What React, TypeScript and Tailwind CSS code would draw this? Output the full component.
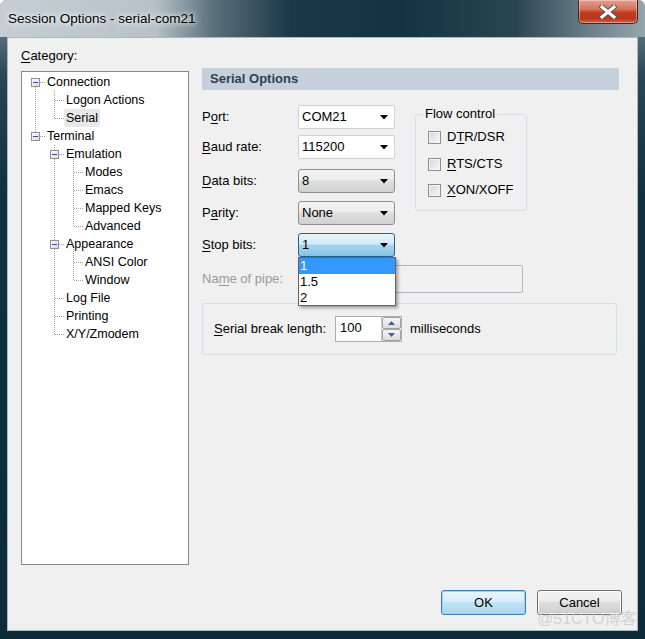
import type { ReactNode } from 'react';

type Row = { t: string; l: number; sel?: boolean };

const rows: Row[] = [
  { t: 'Connection', l: 0 },
  { t: 'Logon Actions', l: 1 },
  { t: 'Serial', l: 1, sel: true },
  { t: 'Terminal', l: 0 },
  { t: 'Emulation', l: 1 },
  { t: 'Modes', l: 2 },
  { t: 'Emacs', l: 2 },
  { t: 'Mapped Keys', l: 2 },
  { t: 'Advanced', l: 2 },
  { t: 'Appearance', l: 1 },
  { t: 'ANSI Color', l: 2 },
  { t: 'Window', l: 2 },
  { t: 'Log File', l: 1 },
  { t: 'Printing', l: 1 },
  { t: 'X/Y/Zmodem', l: 1 },
];

const indent = ['pl-[25px]', 'pl-[44px]', 'pl-[63px]'];

function Arrow() {
  return (
    <svg width="8" height="5" viewBox="0 0 8 5">
      <path d="M0 0h8L4 4.5z" fill="#000" />
    </svg>
  );
}

function Combo({ value, kind }: { value: string; kind: 'edit' | 'btn' | 'focus' }) {
  const look =
    kind === 'edit'
      ? 'border-[#cfd1d5] rounded-[2px] bg-white'
      : kind === 'btn'
        ? 'border-[#8e8f8f] rounded-[3px] bg-[linear-gradient(#f4f4f4_0%,#ececec_45%,#dedede_50%,#d0d0d0_100%)]'
        : 'border-[#2c628b] rounded-[3px] bg-[linear-gradient(#e6f4fc_0%,#d4ecfa_45%,#a9d6f0_50%,#86c2e4_100%)]';
  return (
    <div className={`w-[97px] h-[24px] border flex items-center justify-between pl-[3px] pr-[6px] ${look}`}>
      <span>{value}</span>
      <Arrow />
    </div>
  );
}

function U({ children }: { children: ReactNode }) {
  return <span className="underline underline-offset-2">{children}</span>;
}

function Check({ children }: { children: ReactNode }) {
  return (
    <div className="flex items-center h-[16px]">
      <div className="w-[13px] h-[13px] border border-[#8f8f8f] bg-[linear-gradient(135deg,#d8d8d8,#f7f7f7)] shadow-[inset_0_0_0_1px_#f4f4f4]" />
      <span className="ml-[6px]">{children}</span>
    </div>
  );
}

function TreeLines() {
  const d = { stroke: '#a0a0a0', strokeDasharray: '1 1', shapeRendering: 'crispEdges' as const };
  const box = (x: number, i: number) => {
    const y = 6 + 18 * i;
    return (
      <g key={`b${x}${i}`} shapeRendering="crispEdges">
        <rect x={x + 0.5} y={y + 0.5} width="8" height="8" fill="url(#bx)" stroke="#919191" />
        <line x1={x + 2} x2={x + 7} y1={y + 4.5} y2={y + 4.5} stroke="#2a4fa3" />
      </g>
    );
  };
  const h = (i: number, x1: number, x2: number) => (
    <line key={`h${i}${x1}`} x1={x1} x2={x2} y1={10.5 + 18 * i} y2={10.5 + 18 * i} {...d} />
  );
  return (
    <svg className="absolute inset-0" width="166" height="492">
      <defs>
        <linearGradient id="bx" x1="0" y1="0" x2="1" y2="1">
          <stop offset="0" stopColor="#ffffff" />
          <stop offset="1" stopColor="#d6d6d6" />
        </linearGradient>
      </defs>
      <line x1="13.5" x2="13.5" y1="15" y2="60" {...d} />
      {h(0, 18, 23)}
      {h(3, 18, 23)}
      <line x1="32.5" x2="32.5" y1="19" y2="46.5" {...d} />
      {h(1, 33, 42)}
      {h(2, 33, 42)}
      <line x1="32.5" x2="32.5" y1="73" y2="262.5" {...d} />
      {h(4, 37, 42)}
      {h(9, 37, 42)}
      {h(12, 33, 42)}
      {h(13, 33, 42)}
      {h(14, 33, 42)}
      <line x1="51.5" x2="51.5" y1="87" y2="154.5" {...d} />
      {h(5, 52, 61)}
      {h(6, 52, 61)}
      {h(7, 52, 61)}
      {h(8, 52, 61)}
      <line x1="51.5" x2="51.5" y1="177" y2="208.5" {...d} />
      {h(10, 52, 61)}
      {h(11, 52, 61)}
      {box(9, 0)}
      {box(9, 3)}
      {box(28, 4)}
      {box(28, 9)}
    </svg>
  );
}

export default function App() {
  return (
    <div className="relative w-[645px] h-[639px] overflow-hidden rounded-t-[7px] bg-[linear-gradient(180deg,#7d929c_0%,#2a4553_12%,#13303e_30%,#0f2b39_100%)] font-['Liberation_Sans',Arial,sans-serif] text-[13px] leading-[16px] text-black">
      {/* title bar */}
      <div className="h-[37px] flex items-start bg-[linear-gradient(90deg,#c5ced3_0%,#b7c2c8_24%,#5b717c_33%,#1c3846_45%,#143240_62%,#2a4552_80%,#6f838c_92%,#95a5ad_100%)]">
        <div className="pl-[8px] pt-[11px] text-[13.5px] text-black [text-shadow:0_0_8px_#ffffff,0_0_4px_#ffffff]">
          Session Options - serial-com21
        </div>
        <div className="ml-auto mr-[7px] w-[60px] h-[24px] rounded-b-[5px] border border-t-0 border-[#4a241c] bg-[linear-gradient(#e2a08e_0%,#d4735b_40%,#c13b20_55%,#b8361c_80%,#d0644b_100%)] flex items-center justify-center shadow-[inset_0_0_0_1px_rgba(255,255,255,0.35)]">
          <svg width="18" height="14" viewBox="0 0 18 14">
            <path d="M3 2l12 10M15 2L3 12" stroke="#555" strokeWidth="5" strokeLinecap="square" />
            <path d="M3 2l12 10M15 2L3 12" stroke="#fff" strokeWidth="3" strokeLinecap="square" />
          </svg>
        </div>
      </div>

      {/* client area */}
      <div className="ml-[7px] w-[631px] h-[594px] border border-[#a9b7be] bg-[#f0f0f0] flex flex-col">
        <div className="flex h-[527px]">
          {/* category tree */}
          <div className="ml-[13px] flex flex-col">
            <div className="pt-[10px] h-[26px]">
              <U>C</U>ategory:
            </div>
            <div className="relative mt-[7px] w-[168px] h-[494px] border border-[#828790] bg-white pt-[1px] text-[12.5px]">
              <TreeLines />
              {rows.map((r) =>
                r.sel ? (
                  <div key={r.t} className="relative h-[18px] flex items-center pl-[42px]">
                    <span className="px-[2px] h-[18px] flex items-center bg-[#e8e8e8]">{r.t}</span>
                  </div>
                ) : (
                  <div key={r.t} className={`relative h-[18px] flex items-center ${indent[r.l]}`}>
                    {r.t}
                  </div>
                ),
              )}
            </div>
          </div>

          {/* right panel */}
          <div className="ml-[13px] pt-[30px] w-[417px] flex flex-col">
            <div className="h-[22px] bg-[#c6d0db] flex items-center pl-[8px] font-bold text-[#2f3f50]">Serial Options</div>

            <div className="flex mt-[15px]">
              <div className="flex flex-col w-[193px]">
                <div className="flex items-center">
                  <span className="w-[96px]">P<U>o</U>rt:</span>
                  <Combo value="COM21" kind="edit" />
                </div>
                <div className="flex items-center mt-[6px]">
                  <span className="w-[96px]"><U>B</U>aud rate:</span>
                  <Combo value="115200" kind="edit" />
                </div>
                <div className="flex items-center mt-[10px]">
                  <span className="w-[96px]"><U>D</U>ata bits:</span>
                  <Combo value="8" kind="btn" />
                </div>
                <div className="flex items-center mt-[8px]">
                  <span className="w-[96px]">P<U>a</U>rity:</span>
                  <Combo value="None" kind="btn" />
                </div>
                <div className="flex items-center mt-[8px]">
                  <span className="w-[96px]"><U>S</U>top bits:</span>
                  <div className="relative">
                    <Combo value="1" kind="focus" />
                    <div className="absolute left-0 top-full z-10 w-[98px] border border-[#646464] bg-white shadow-[2px_2px_3px_rgba(0,0,0,0.35)]">
                      <div className="h-[16px] flex items-center pl-[1px] bg-[#3399ff] text-white">1</div>
                      <div className="h-[16px] flex items-center pl-[1px]">1.5</div>
                      <div className="h-[15px] flex items-center pl-[1px]">2</div>
                    </div>
                  </div>
                </div>
              </div>

              <fieldset className="ml-[20px] mt-[1px] w-[112px] h-[105px] border border-[#d5dfe5] rounded-[3px] pl-[12px]">
                <legend className="ml-[-5px] px-[2px]">Flow control</legend>
                <div className="pt-[7px] flex flex-col">
                  <Check>
                    D<U>T</U>R/DSR
                  </Check>
                  <div className="mt-[11px]">
                    <Check>
                      <U>R</U>TS/CTS
                    </Check>
                  </div>
                  <div className="mt-[10px]">
                    <Check>
                      <U>X</U>ON/XOFF
                    </Check>
                  </div>
                </div>
              </fieldset>
            </div>

            <div className="flex items-center mt-[8px]">
              <span className="w-[96px] text-[#9a9a9a]">
                Na<U>m</U>e of pipe:
              </span>
              <div className="w-[225px] h-[28px] border border-[#b4b8bc] rounded-[2px] bg-[#f0f0f0]" />
            </div>

            <div className="mt-[10px] w-[415px] h-[52px] border border-[#d5dfe5] rounded-[3px] flex items-center pl-[11px]">
              <span className="w-[121px]">
                <U>S</U>erial break length:
              </span>
              <div className="flex h-[26px] border border-[#abadb3] bg-white">
                <div className="w-[45px] pl-[4px] pt-[3px]">100</div>
                <div className="w-[20px] flex flex-col border-l border-[#c8c8c8]">
                  <div className="h-[12px] border border-[#a3a3a3] rounded-[2px] bg-[linear-gradient(#f6f6f6,#dcdcdc)] flex items-center justify-center">
                    <svg width="7" height="4" viewBox="0 0 7 4">
                      <path d="M0 4h7L3.5 0z" fill="#4b5f8e" />
                    </svg>
                  </div>
                  <div className="h-[12px] border border-[#a3a3a3] rounded-[2px] bg-[linear-gradient(#f6f6f6,#dcdcdc)] flex items-center justify-center">
                    <svg width="7" height="4" viewBox="0 0 7 4">
                      <path d="M0 0h7L3.5 4z" fill="#4b5f8e" />
                    </svg>
                  </div>
                </div>
              </div>
              <span className="ml-[8px]">milliseconds</span>
            </div>
          </div>
        </div>

        {/* buttons */}
        <div className="flex justify-end gap-[11px] pr-[15px] mt-[25px]">
          <div className="w-[85px] h-[25px] rounded-[3px] border border-[#3c7fb1] bg-[linear-gradient(#e9f5fc_0%,#d9effb_45%,#c0e4f8_50%,#aad8f2_100%)] shadow-[inset_0_0_0_1px_#9fd3f5] flex items-center justify-center">
            OK
          </div>
          <div className="w-[85px] h-[25px] rounded-[3px] border border-[#707070] bg-[linear-gradient(#f2f2f2_0%,#ebebeb_45%,#dddddd_50%,#cfcfcf_100%)] shadow-[inset_0_0_0_1px_#fcfcfc] flex items-center justify-center">
            Cancel
          </div>
        </div>
      </div>

      {/* watermark */}
      <div className="absolute left-[537px] top-[609px] text-[16px] leading-[20px] text-[#c9c9c9]/80 font-['Liberation_Sans','Noto_Sans_CJK_SC',sans-serif]">
        @51CTO博客
      </div>
    </div>
  );
}
